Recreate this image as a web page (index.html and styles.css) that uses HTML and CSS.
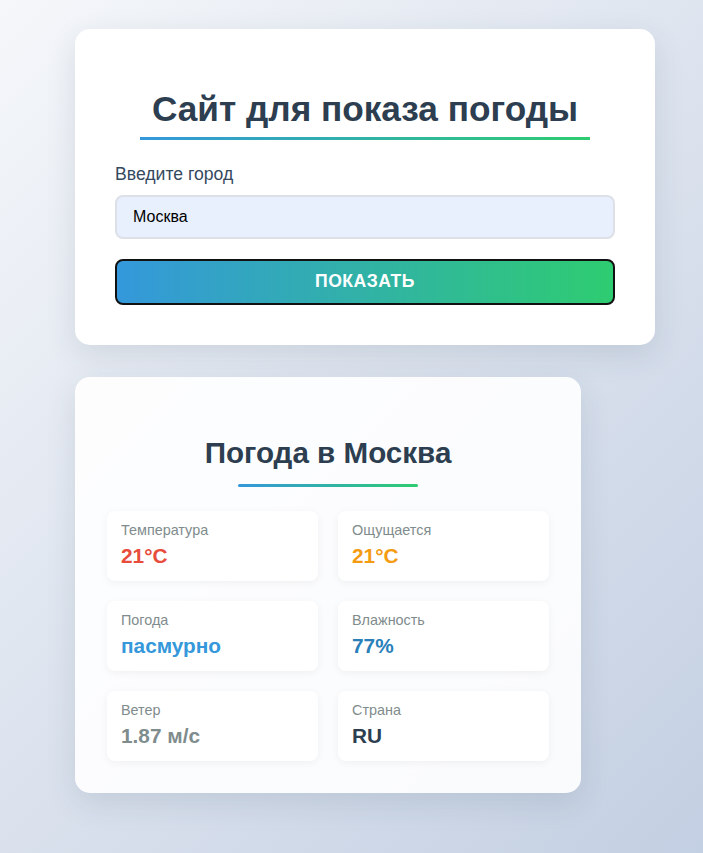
FILE: index.html
```html
<!DOCTYPE html>
<html lang="ru">
<head>
<meta charset="utf-8">
<title>Сайт для показа погоды</title>
<link rel="stylesheet" href="styles.css">
</head>
<body>
<main class="page">
  <section class="card search-card">
    <div class="title-wrap">
      <h1 class="main-title">Сайт для показа погоды</h1>
    </div>
    <form class="search-form">
      <label class="field-label" for="city">Введите город</label>
      <input class="city-input" id="city" type="text" value="Москва">
      <button class="submit-btn" type="button">Показать</button>
    </form>
  </section>

  <section class="card result-card">
    <h2 class="result-title">Погода в Москва</h2>
    <div class="divider"></div>
    <div class="info-grid">
      <div class="info-item">
        <div class="info-label">Температура</div>
        <div class="info-value temp">21°C</div>
      </div>
      <div class="info-item">
        <div class="info-label">Ощущается</div>
        <div class="info-value feels">21°C</div>
      </div>
      <div class="info-item">
        <div class="info-label">Погода</div>
        <div class="info-value desc">пасмурно</div>
      </div>
      <div class="info-item">
        <div class="info-label">Влажность</div>
        <div class="info-value humidity">77%</div>
      </div>
      <div class="info-item">
        <div class="info-label">Ветер</div>
        <div class="info-value wind">1.87 м/с</div>
      </div>
      <div class="info-item">
        <div class="info-label">Страна</div>
        <div class="info-value country">RU</div>
      </div>
    </div>
  </section>
</main>
</body>
</html>
```

FILE: styles.css
```css
* { box-sizing: border-box; }

html, body {
  margin: 0;
  min-height: 100%;
}

body {
  min-height: 853px;
  font-family: "Liberation Sans", Arial, sans-serif;
  color: #2c3e50;
  background: linear-gradient(135deg, #f5f7fa 0%, #c3cfe2 100%);
}

.page {
  display: flex;
  flex-direction: column;
  align-items: flex-start;
  gap: 32px;
  padding: 29px 0 40px 75px;
}

.card {
  border-radius: 15px;
  box-shadow: 0 10px 30px rgba(44, 62, 80, 0.12);
}

.search-card {
  width: 580px;
  background: #ffffff;
  padding: 60px 40px 40px;
}

.title-wrap {
  display: flex;
  justify-content: center;
}

.main-title {
  margin: 0;
  padding: 0 12px 10px;
  font-size: 35.2px;
  line-height: 40.5px;
  font-weight: 700;
  color: #2c3e50;
  background: linear-gradient(90deg, #3498db, #2ecc71) no-repeat left bottom / 100% 3px;
}

.search-form {
  display: flex;
  flex-direction: column;
  margin-top: 24px;
}

.field-label {
  font-size: 17.6px;
  line-height: 20px;
  color: #34495e;
  margin-bottom: 11.5px;
}

.city-input {
  width: 100%;
  height: 44px;
  padding: 0 16px;
  font-family: "Liberation Sans", Arial, sans-serif;
  font-size: 16px;
  color: #000;
  background: #e8f0fe;
  border: 2px solid #dde1e7;
  border-radius: 8px;
  outline: none;
}

.submit-btn {
  margin-top: 19.5px;
  width: 100%;
  height: 46px;
  font-family: "Liberation Sans", Arial, sans-serif;
  font-size: 17.6px;
  font-weight: 700;
  letter-spacing: 0.5px;
  text-transform: uppercase;
  color: #ffffff;
  background: linear-gradient(90deg, #3498db 0%, #2ecc71 100%);
  border: 2px solid #111;
  border-radius: 8px;
}

.result-card {
  width: 506px;
  padding: 32px;
  background: rgba(255, 255, 255, 0.9);
}

.result-title {
  margin: 27px 0 0;
  text-align: center;
  font-size: 29.6px;
  line-height: 34px;
  font-weight: 700;
  color: #2c3e50;
}

.divider {
  width: 180px;
  height: 3px;
  margin: 14px auto 24px;
  border-radius: 2px;
  background: linear-gradient(90deg, #3498db, #2ecc71);
}

.info-grid {
  display: grid;
  grid-template-columns: 1fr 1fr;
  gap: 20px;
}

.info-item {
  height: 70px;
  padding: 11px 14px;
  background: #ffffff;
  border-radius: 8px;
  box-shadow: 0 2px 8px rgba(0, 0, 0, 0.05);
}

.info-label {
  font-size: 14.4px;
  line-height: 16.6px;
  color: #7f8c8d;
  margin-bottom: 6px;
}

.info-value {
  font-size: 20.8px;
  line-height: 24px;
  font-weight: 700;
}

.temp { color: #e74c3c; }
.feels { color: #f39c12; }
.desc { color: #3498db; }
.humidity { color: #2980b9; }
.wind { color: #7f8c8d; }
.country { color: #2c3e50; }
```
